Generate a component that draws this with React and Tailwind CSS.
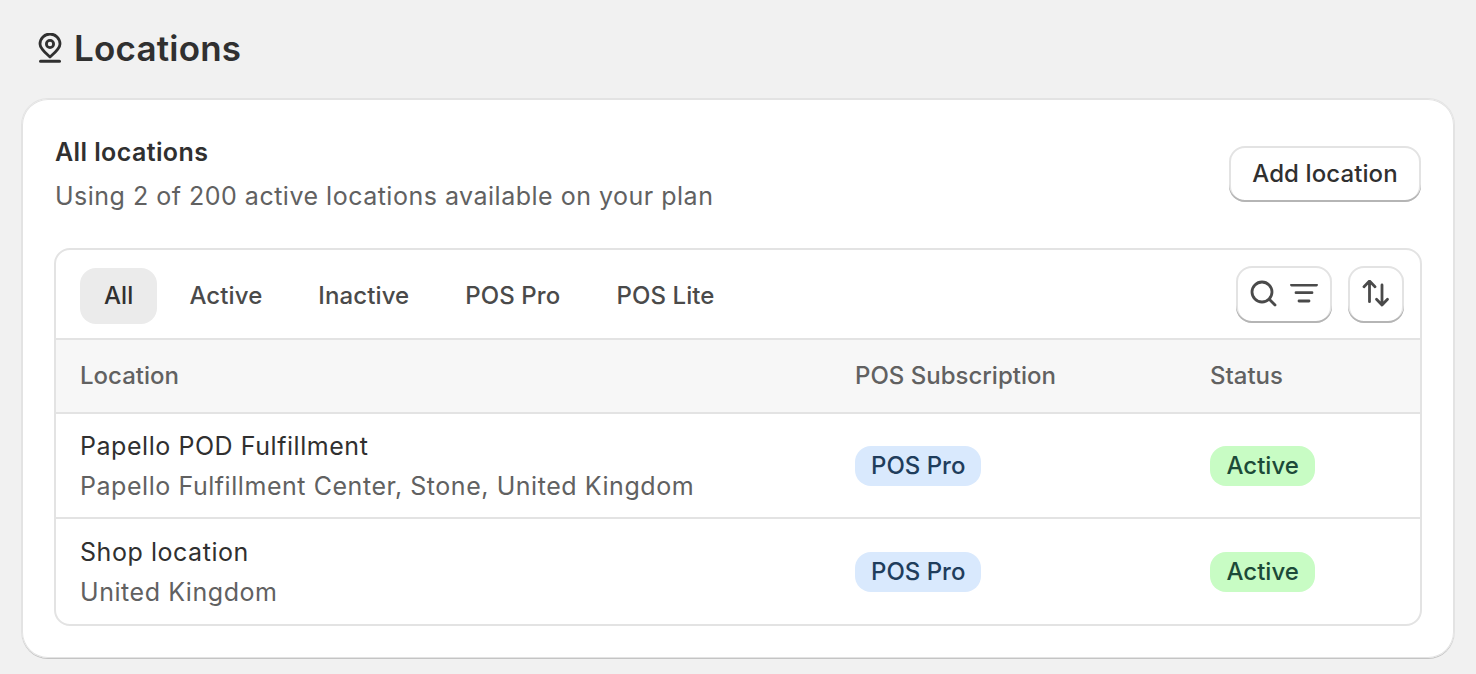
import React from 'react';

const tabs = ['All', 'Active', 'Inactive', 'POS Pro', 'POS Lite'];

const rows = [
  { name: 'Papello POD Fulfillment', address: 'Papello Fulfillment Center, Stone, United Kingdom' },
  { name: 'Shop location', address: 'United Kingdom' },
];

const btnShadow = 'shadow-[inset_0_-2px_0_0_#b5b5b5,inset_0_0_0_2px_#e3e3e3]';

function PinIcon() {
  return (
    <svg width="26" height="30" viewBox="0 0 26 30" fill="none" stroke="#303030" strokeWidth="2.800">
      <path d="M13 24C8.500 20 3 15.700 3 11a10 10 0 0 1 20 0c0 4.700-5.500 9-10 13Z" strokeLinejoin="round" />
      <circle cx="13" cy="11" r="3.600" />
      <path d="M3.500 28.200h19" strokeLinecap="round" strokeWidth="3" />
    </svg>
  );
}

export default function App() {
  return (
    <div className="min-h-[674px] bg-[#f1f1f1] px-[22px] font-['Inter',sans-serif] text-[#303030]">
      <div className="flex h-[99px] items-center gap-[11px] pb-[3px] pl-[15px]">
        <PinIcon />
        <h1 className="text-[35px] font-semibold leading-[48px] tracking-[0.2px]">Locations</h1>
      </div>

      <div className="h-[559px] rounded-[26px] bg-white px-[32px] pt-[32px] shadow-[0_1px_0_0_#c4c4c4,0_0_0_1px_#e3e3e3,inset_0_0_0_1px_#e3e3e3]">
        <div className="flex h-[117px] items-start justify-between">
          <div className="pl-[1px]">
            <div className="text-[25px] font-semibold leading-[42px] tracking-[0.4px]">All locations</div>
            <div className="mt-[3px] text-[25px] leading-[40px] tracking-[0.5px] text-[#616161]">
              Using 2 of 200 active locations available on your plan
            </div>
          </div>
          <button className={`mr-[1px] mt-[15px] h-[56px] w-[192px] rounded-[16px] bg-white text-[24px] font-medium tracking-[0.1px] ${btnShadow}`}>
            Add location
          </button>
        </div>

        <div className="overflow-hidden rounded-[16px] border-2 border-[#e3e3e3]">
          <div className="flex h-[88px] items-center justify-between pl-[24px] pr-[16px]">
            <div className="flex items-center gap-[8px] pt-[3px]">
              {tabs.map((t, i) => (
                <div
                  key={t}
                  className={`flex h-[56px] items-center rounded-[16px] px-[24px] text-[24px] font-medium tracking-[0.1px] ${i === 0 ? 'bg-[#ebebeb] text-[#303030]' : 'text-[#4a4a4a]'}`}
                >
                  {t}
                </div>
              ))}
            </div>
            <div className="flex items-center gap-[16px]">
              <button className={`flex h-[57px] w-[96px] items-center justify-center gap-[12px] rounded-[16px] bg-white ${btnShadow}`}>
                <svg width="28" height="28" viewBox="0 0 28 28" fill="none" stroke="#4a4a4a" strokeWidth="2.800" strokeLinecap="round">
                  <circle cx="12" cy="12" r="10" />
                  <path d="m19.500 19.500 5.500 5.500" />
                </svg>
                <svg width="28" height="20" viewBox="0 0 28 20" fill="none" stroke="#4a4a4a" strokeWidth="2.800" strokeLinecap="round">
                  <path d="M1.500 1h25M6 8.700h16M9 17h10" />
                </svg>
              </button>
              <button className={`flex h-[57px] w-[56px] items-center justify-center rounded-[16px] bg-white ${btnShadow}`}>
                <svg width="28" height="28" viewBox="0 0 28 28" fill="none" stroke="#4a4a4a" strokeWidth="2.800" strokeLinecap="round" strokeLinejoin="round">
                  <path d="M7.500 21.700V1M2 6.700l5.500-5.700 5.500 5.700" />
                  <path d="M20 5v20M14.500 19.300l5.500 5.700 5.500-5.700" />
                </svg>
              </button>
            </div>
          </div>

          <div className="grid h-[76px] grid-cols-[775px_355px_1fr] items-center border-y-2 border-[#e3e3e3] bg-[#f7f7f7] pl-[24px] text-[24px] font-medium text-[#616161]">
            <div>Location</div>
            <div>POS Subscription</div>
            <div>Status</div>
          </div>

          {rows.map((r, i) => (
            <div
              key={r.name}
              className={`grid h-[105px] grid-cols-[775px_355px_1fr] items-center pl-[24px] ${i === 0 ? 'border-b-2 border-[#e3e3e3]' : ''}`}
            >
              <div>
                <div className="text-[25px] leading-[40px] tracking-[0.55px]">{r.name}</div>
                <div className="text-[25px] leading-[40px] tracking-[0.55px] text-[#616161]">{r.address}</div>
              </div>
              <div>
                <span className="inline-flex h-[40px] items-center rounded-[16px] bg-[#d9e9fd] px-[16px] text-[24px] font-medium text-[#1f3d5c]">
                  POS Pro
                </span>
              </div>
              <div>
                <span className="inline-flex h-[40px] items-center rounded-[16px] bg-[#c8fcc4] px-[16.500px] text-[24px] font-medium text-[#1c4a38]">
                  Active
                </span>
              </div>
            </div>
          ))}
        </div>
      </div>
    </div>
  );
}
